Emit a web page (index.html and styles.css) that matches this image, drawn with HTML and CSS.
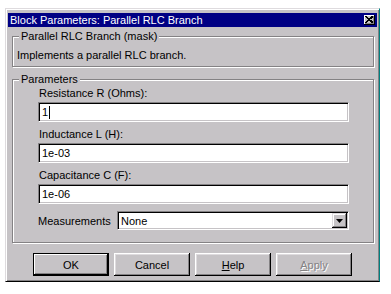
FILE: index.html
```html
<!DOCTYPE html>
<html lang="en">
<head>
    <meta charset="UTF-8">
    <title>Block Parameters: Parallel RLC Branch</title>
    <link rel="stylesheet" href="styles.css">
</head>
<body>
    <div class="dialog">
        <div class="titlebar">
            <span class="title">Block Parameters: Parallel RLC Branch</span>
            <span class="close">
                <svg width="8" height="7" viewBox="0 0 8 7"><path d="M0.5 0.5 L7 6.5 M1.5 0.5 L8 6.5 M7 0.5 L0.5 6.5 M8 0.5 L1.5 6.5" stroke="#000" stroke-width="1" fill="none" shape-rendering="crispEdges"/></svg>
            </span>
        </div>

        <fieldset class="group mask">
            <legend>Parallel RLC Branch (mask)</legend>
            <p class="desc">Implements a parallel RLC branch.</p>
        </fieldset>

        <fieldset class="group params">
            <legend>Parameters</legend>
            <div class="params-body">
                <div class="field-label">Resistance R (Ohms):</div>
                <div class="field">1<span class="caret"></span></div>
                <div class="field-label">Inductance L (H):</div>
                <div class="field">1e-03</div>
                <div class="field-label">Capacitance C (F):</div>
                <div class="field">1e-06</div>
                <div class="measure-row">
                    <span class="measure-label">Measurements</span>
                    <div class="select">
                        <span class="select-value">None</span>
                        <span class="drop">
                            <svg width="7" height="4" viewBox="0 0 7 4"><path d="M0 0 H7 L3.5 4 Z" fill="#000"/></svg>
                        </span>
                    </div>
                </div>
            </div>
        </fieldset>

        <div class="buttons">
            <div class="btn default">OK</div>
            <div class="btn">Cancel</div>
            <div class="btn"><u>H</u>elp</div>
            <div class="btn disabled"><u>A</u>pply</div>
        </div>
    </div>
</body>
</html>
```

FILE: styles.css
```css
* {
    box-sizing: border-box;
}
body {
    margin: 0;
    background-color: #ffffff;
    font-family: "Liberation Sans", Arial, sans-serif;
    font-size: 11px;
    color: #000;
}
.dialog {
    margin: 8px 0 0 5px;
    width: 375px;
    height: 274px;
    padding: 1px;
    background-color: #c6c3c6;
    border: 1px solid;
    border-color: #dedbde #008080 #000 #dedbde;
    box-shadow: inset 1px 1px #fff, inset -1px -1px #848284;
}
.titlebar {
    margin: 3px 1px 0 1px;
    height: 14px;
    padding: 0 2px;
    background-color: #000084;
    color: #fff;
    display: flex;
    align-items: center;
    justify-content: space-between;
    line-height: 14px;
}
.close {
    width: 11px;
    height: 10px;
    background-color: #c6c3c6;
    box-shadow: inset -1px -1px #000, inset 1px 1px #fff, inset -2px -2px #848284;
    display: flex;
    align-items: center;
    justify-content: center;
    padding: 0 1px 1px 0;
}
.close svg {
    display: block;
}
.group {
    margin: 0 4px 0 5px;
    padding: 0;
    min-inline-size: 0;
    border: 1px solid #848284;
    box-shadow: 1px 1px #fff, inset 1px 1px #fff;
}
.group legend {
    margin-left: 6px;
    padding: 0 2px;
    line-height: 13px;
    background-color: #c6c3c6;
}
.mask {
    margin-top: 3px;
}
.desc {
    margin: 0;
    padding: 6px 0 4px 4px;
    line-height: 13px;
}
.params {
    margin-top: 6px;
}
.params-body {
    padding: 1px 0 12px 25px;
}
.field-label {
    line-height: 13px;
    padding-left: 1px;
    margin-bottom: 2px;
}
.field {
    width: 311px;
    height: 20px;
    margin-bottom: 6px;
    padding: 0 3px;
    background-color: #fff;
    line-height: 18px;
    border: 1px solid;
    border-color: #848284 #fff #fff #848284;
    box-shadow: inset 1px 1px #000, inset -1px -1px #c6c3c6;
    display: flex;
    align-items: center;
}
.caret {
    display: inline-block;
    width: 1px;
    height: 13px;
    margin-left: 1px;
    background-color: #000;
}
.measure-row {
    display: flex;
    align-items: center;
    margin-top: 7px;
}
.measure-label {
    width: 79px;
}
.select {
    width: 232px;
    height: 19px;
    background-color: #fff;
    border: 1px solid;
    border-color: #848284 #fff #fff #848284;
    box-shadow: inset 1px 1px #000, inset -1px -1px #c6c3c6;
    display: flex;
    align-items: center;
    justify-content: space-between;
    padding: 1px 1px 1px 3px;
}
.drop {
    width: 15px;
    height: 15px;
    background-color: #c6c3c6;
    box-shadow: inset -1px -1px #000, inset 1px 1px #dedbde, inset -2px -2px #848284, inset 2px 2px #fff;
    display: flex;
    align-items: center;
    justify-content: center;
}
.drop svg {
    display: block;
}
.buttons {
    display: flex;
    gap: 5px;
    margin-top: 10px;
    padding-left: 26px;
}
.btn {
    width: 76px;
    height: 23px;
    display: flex;
    align-items: center;
    justify-content: center;
    background-color: #c6c3c6;
    box-shadow: inset -1px -1px #000, inset 1px 1px #fff, inset -2px -2px #848284, inset 2px 2px #dedbde;
}
.btn.default {
    border: 1px solid #000;
    box-shadow: inset -1px -1px #000, inset 1px 1px #fff, inset -2px -2px #848284;
}
.btn.disabled {
    color: #848284;
    text-shadow: 1px 1px #fff;
}
```
